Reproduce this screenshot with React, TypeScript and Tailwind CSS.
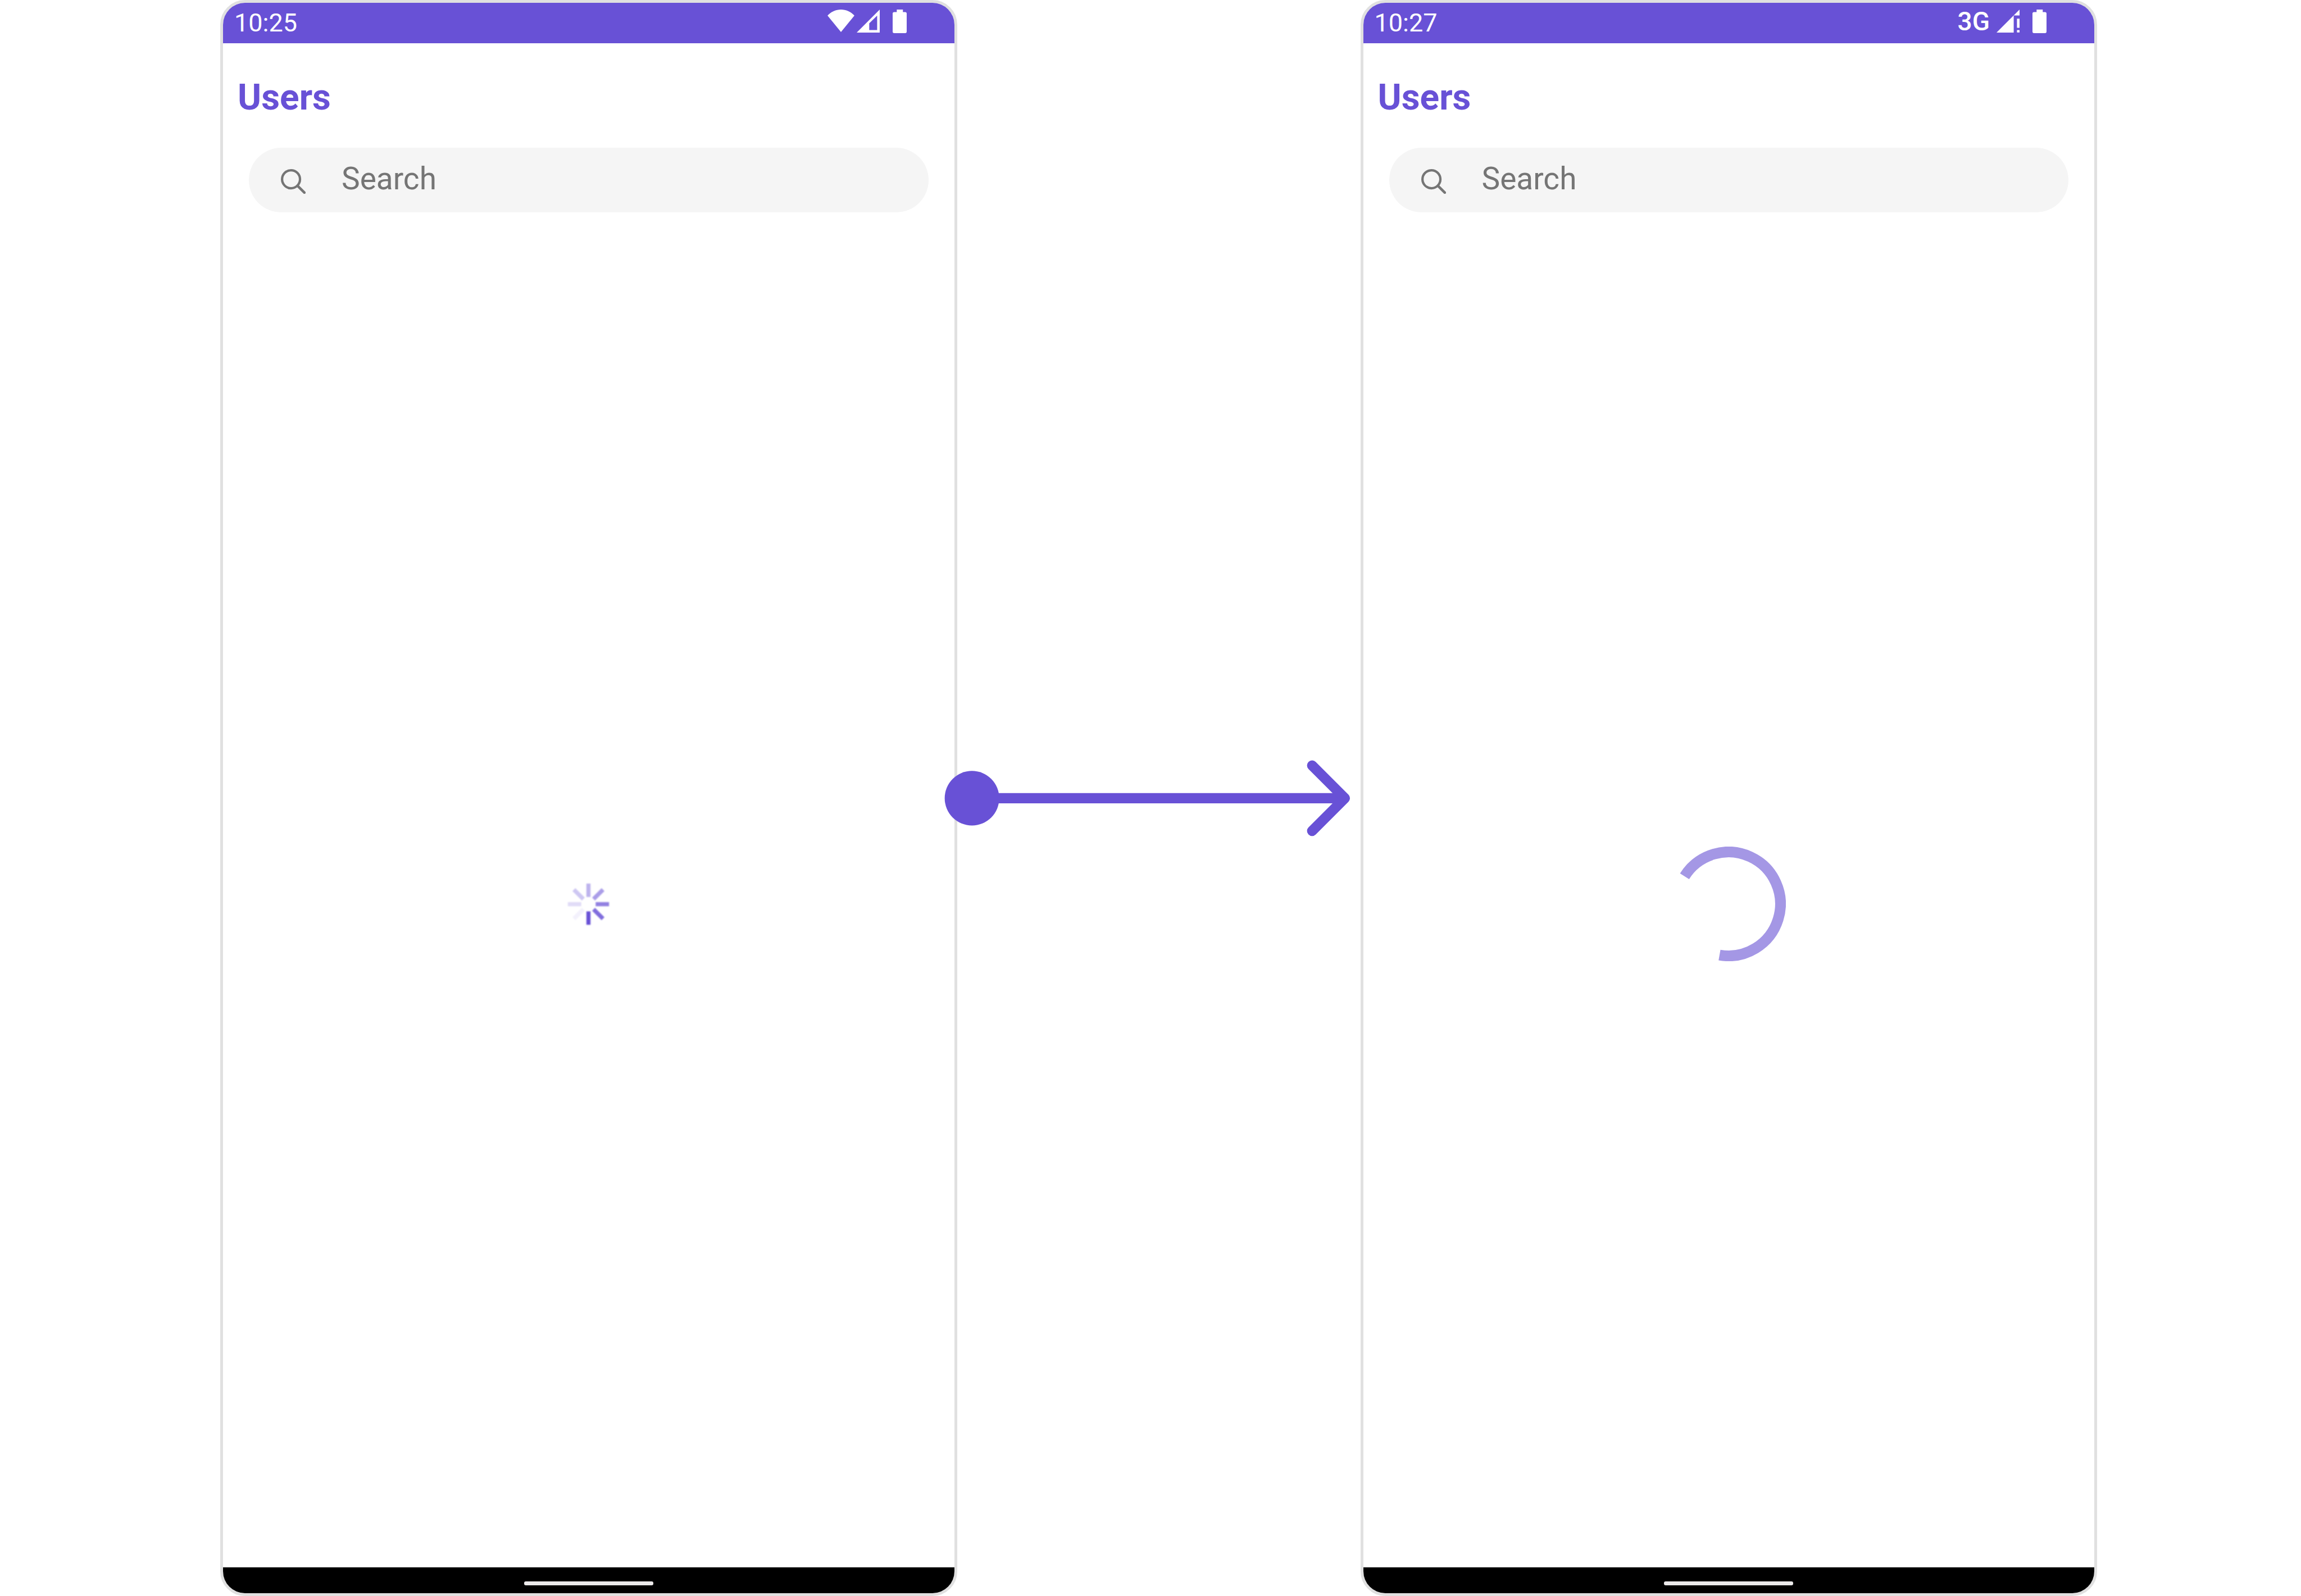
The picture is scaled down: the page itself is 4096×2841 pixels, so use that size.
import React from "react";

function WifiIcon() {
  return (
    <svg viewBox="0 0 159 133" className="h-[40px] w-[48px]" fill="#fff" aria-hidden="true">
      <path d="M0 36C22 12 50 0 79.500 0S137 12 159 36L79.500 133Z" />
    </svg>
  );
}

function SignalIcon() {
  return (
    <svg viewBox="0 0 134 134" className="h-[41px] w-[41px]" fill="#fff" aria-hidden="true">
      <path fillRule="evenodd" d="M134 0V134H0ZM119 35L73 80V119H119Z" />
    </svg>
  );
}

function SignalAlertIcon() {
  return (
    <svg viewBox="0 0 134 134" className="h-[41px] w-[41px]" fill="#fff" aria-hidden="true">
      <path d="M134 0V34H100V134H0ZM119 53H134V106H119ZM119 119H134V133H119Z" />
    </svg>
  );
}

function BatteryIcon() {
  return (
    <svg viewBox="0 0 82 138" className="h-[42px] w-[25px]" fill="#fff" aria-hidden="true">
      <path d="M24 0H60V15H73Q82 15 82 24V129Q82 138 73 138H9Q0 138 0 129V24Q0 15 9 15H24Z" />
    </svg>
  );
}

function SearchIcon() {
  return (
    <svg viewBox="0 0 146 146" className="h-[44px] w-[44px]" fill="none" stroke="#757575" strokeLinecap="round" aria-hidden="true">
      <circle cx="60" cy="60" r="53" strokeWidth="14" />
      <path d="M98 98L139 139" strokeWidth="15" />
    </svg>
  );
}

function SpokeSpinner() {
  const opacities = [0.44, 0.56, 0.72, 0.84, 1, 0.08, 0.2, 0.32];
  return (
    <svg viewBox="-42 -42 84 84" className="h-[77px] w-[77px] overflow-visible blur-[1px]" role="img" aria-label="Loading">
      {opacities.map((opacity, i) => (
        <rect
          key={i}
          x="-4"
          y="-40"
          width="8"
          height="26"
          fill="#6851D6"
          opacity={opacity}
          transform={`rotate(${i * 45})`}
        />
      ))}
    </svg>
  );
}

function ArcSpinner() {
  return (
    <svg viewBox="-336 -336 672 672" className="h-[204px] w-[204px]" role="img" aria-label="Loading">
      <path d="M-258 -162A304.500 304.500 0 1 1 -53 300" fill="none" stroke="#A497E5" strokeWidth="63" />
    </svg>
  );
}

function Connector() {
  return (
    <div className="relative flex w-[718px] shrink-0 items-center self-stretch">
      <div className="absolute right-[18px] -left-[23px] z-10">
        <svg viewBox="0 0 794 160" className="block w-full" fill="none" stroke="#6851D6" strokeWidth="20" aria-hidden="true">
          <circle cx="54" cy="80" r="53.300" fill="#6851D6" stroke="none" />
          <path d="M54 80H783" />
          <path d="M719 16L783 80L719 144" strokeLinecap="round" strokeLinejoin="round" />
        </svg>
      </div>
    </div>
  );
}

interface PhoneProps {
  id: string;
  time: string;
  icons: React.ReactNode;
  children: React.ReactNode;
}

function Phone({ id, time, icons, children }: PhoneProps) {
  return (
    <section className="flex min-w-0 flex-1 flex-col overflow-hidden rounded-[44px] border-[5px] border-[#E0E0E0] bg-white">
      <div className="flex h-[72px] items-start justify-between bg-[#6851D6] pr-[85px] pl-[20px] text-white">
        <span className="pt-[9px] text-[45px] leading-[53px]">{time}</span>
        <div className="flex items-start pt-[12px]">{icons}</div>
      </div>
      <h1 className="mt-[59px] px-[26px] text-[64px] leading-[75px] font-bold text-[#6851D6]">Users</h1>
      <label
        htmlFor={id}
        className="mx-[46px] mt-[52px] flex h-[115px] items-center gap-[64px] rounded-full bg-[#F5F5F5] px-[57px]"
      >
        <span className="shrink-0 pt-[4px]">
          <SearchIcon />
        </span>
        <input
          id={id}
          type="text"
          placeholder="Search"
          aria-label="Search"
          className="h-[70px] min-w-0 flex-1 bg-transparent pb-[6px] text-[55px] leading-[64px] text-[#757575] outline-none placeholder:text-[#757575] placeholder:opacity-100"
        />
      </label>
      <div className="flex flex-1 items-center justify-center pt-[50px]">{children}</div>
      <div className="flex h-[46px] justify-center bg-black pt-[25px]">
        <div className="h-[7px] w-[230px] rounded-[3px] bg-[#EBE9EA]" />
      </div>
    </section>
  );
}

export default function App() {
  return (
    <main className="flex min-h-screen bg-white pr-[363px] pl-[392px] font-['Roboto',sans-serif]">
      <Phone
        id="search-left"
        time="10:25"
        icons={
          <>
            <WifiIcon />
            <span className="ml-[4px]">
              <SignalIcon />
            </span>
            <span className="ml-[23px]">
              <BatteryIcon />
            </span>
          </>
        }
      >
        <SpokeSpinner />
      </Phone>
      <Connector />
      <Phone
        id="search-right"
        time="10:27"
        icons={
          <>
            <span className="text-[46px] leading-[42px] font-medium">3G</span>
            <span className="ml-[12px]">
              <SignalAlertIcon />
            </span>
            <span className="ml-[23px]">
              <BatteryIcon />
            </span>
          </>
        }
      >
        <ArcSpinner />
      </Phone>
    </main>
  );
}
